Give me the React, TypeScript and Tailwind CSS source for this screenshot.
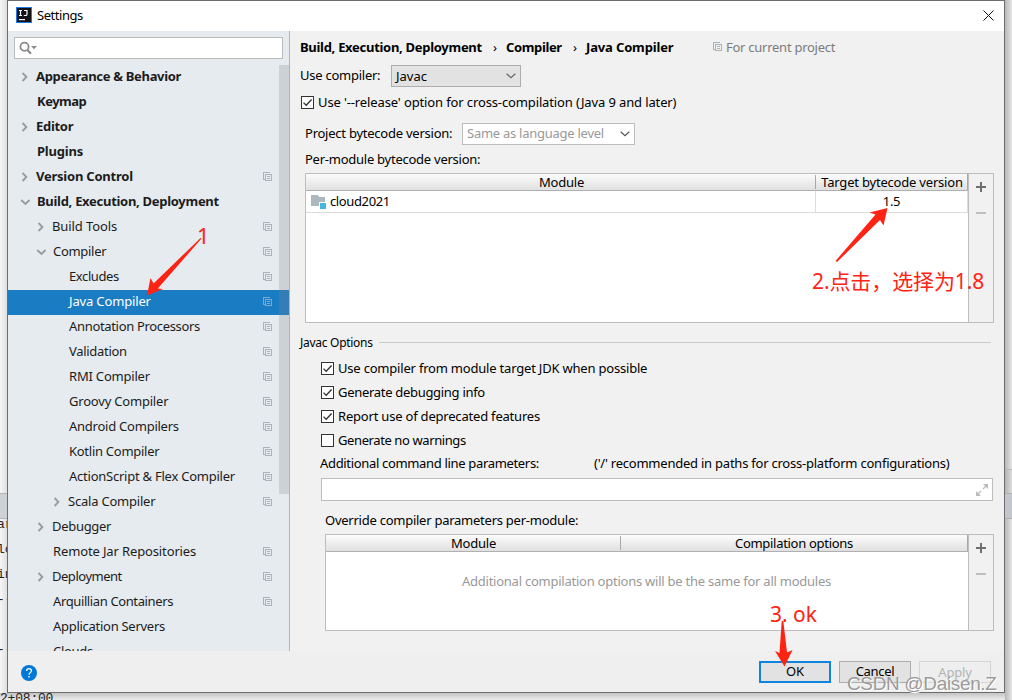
import React from "react";

type TreeItem = {
  label: string;
  level: 0 | 1 | 2;
  tracking: string;
  arrow?: "right" | "down";
  bold?: boolean;
  copy?: boolean;
  selected?: boolean;
};

const tree: TreeItem[] = [
  { label: "Appearance & Behavior", level: 0, arrow: "right", bold: true, tracking: "tracking-[-0.31px]" },
  { label: "Keymap", level: 0, bold: true, tracking: "tracking-[-0.5px]" },
  { label: "Editor", level: 0, arrow: "right", bold: true, tracking: "tracking-[-0.3px]" },
  { label: "Plugins", level: 0, bold: true, tracking: "tracking-[-0.2px]" },
  { label: "Version Control", level: 0, arrow: "right", bold: true, copy: true, tracking: "tracking-[-0.23px]" },
  { label: "Build, Execution, Deployment", level: 0, arrow: "down", bold: true, tracking: "tracking-[-0.29px]" },
  { label: "Build Tools", level: 1, arrow: "right", copy: true, tracking: "tracking-[-0.1px]" },
  { label: "Compiler", level: 1, arrow: "down", copy: true, tracking: "tracking-[-0.3px]" },
  { label: "Excludes", level: 2, copy: true, tracking: "tracking-[-0.4px]" },
  { label: "Java Compiler", level: 2, copy: true, selected: true, tracking: "tracking-[-0.15px]" },
  { label: "Annotation Processors", level: 2, copy: true, tracking: "tracking-[-0.33px]" },
  { label: "Validation", level: 2, copy: true, tracking: "tracking-[-0.3px]" },
  { label: "RMI Compiler", level: 2, copy: true, tracking: "tracking-[-0.2px]" },
  { label: "Groovy Compiler", level: 2, copy: true, tracking: "tracking-[-0.2px]" },
  { label: "Android Compilers", level: 2, copy: true, tracking: "tracking-[-0.24px]" },
  { label: "Kotlin Compiler", level: 2, copy: true, tracking: "tracking-[-0.27px]" },
  { label: "ActionScript & Flex Compiler", level: 2, copy: true, tracking: "tracking-[-0.24px]" },
  { label: "Scala Compiler", level: 2, arrow: "right", copy: true, tracking: "tracking-[-0.21px]" },
  { label: "Debugger", level: 1, arrow: "right", tracking: "tracking-[-0.3px]" },
  { label: "Remote Jar Repositories", level: 1, copy: true, tracking: "tracking-[-0.13px]" },
  { label: "Deployment", level: 1, arrow: "right", copy: true, tracking: "tracking-[-0.48px]" },
  { label: "Arquillian Containers", level: 1, copy: true, tracking: "tracking-[-0.38px]" },
  { label: "Application Servers", level: 1, tracking: "tracking-[-0.28px]" },
  { label: "Clouds", level: 1, tracking: "tracking-[-0.3px]" },
];

const indent = ["pl-[12px]", "pl-[28px]", "pl-[44px]"];

function CopyIcon({ className = "text-[#a9b3ba]" }: { className?: string }) {
  return (
    <svg width="10" height="10" viewBox="0 0 10 10" fill="none" stroke="currentColor" className={`shrink-0 ${className}`} shapeRendering="crispEdges">
      <path d="M7 0.5H0.5V7H2.5M2.5 2.5H8.5V8.5H2.5ZM4 4.5H7M4 6.5H7" />
    </svg>
  );
}

function TreeArrow({ dir }: { dir?: "right" | "down" }) {
  return (
    <svg width="10" height="10" viewBox="0 0 10 10" fill="none" stroke="#999da0" strokeWidth="1.9" className="shrink-0">
      {dir === "right" && <path d="M2.6 1L6.4 5L2.6 9" />}
      {dir === "down" && <path d="M1.2 3L5.4 7L9.6 3" />}
    </svg>
  );
}

function TreeRow({ item }: { item: TreeItem }) {
  return (
    <div
      className={`flex h-[25px] shrink-0 items-center pb-[2px] pr-[16px] ${indent[item.level]} ${
        item.selected ? "bg-[#1a7dc4] text-white" : "text-[#1c1c1c]"
      }`}
    >
      <TreeArrow dir={item.arrow} />
      <span className={`-mt-px whitespace-pre ${item.arrow === "right" ? "pl-[6px]" : "pl-[7px]"} ${item.bold ? "font-bold" : ""} ${item.tracking}`}>
        {item.label}
      </span>
      <span className="grow" />
      {item.copy && <CopyIcon className={item.selected ? "text-[#7fa9cc]" : "text-[#a9b3ba]"} />}
    </div>
  );
}

function Check({ on = true }: { on?: boolean }) {
  return (
    <svg width="13" height="13" viewBox="0 0 13 13" className="-mt-px shrink-0">
      <rect x="0.5" y="0.5" width="12" height="12" fill="#fff" stroke="#333" />
      {on && <path d="M2.5 6.6L5.2 9.3L10.6 3.5" fill="none" stroke="#333" strokeWidth="1.3" />}
    </svg>
  );
}

function Caret({ color }: { color: string }) {
  return (
    <svg width="10" height="6" viewBox="0 0 10 6" fill="none" stroke={color} strokeWidth="1.2" className="shrink-0">
      <path d="M0.7 0.8L5 4.8L9.3 0.8" />
    </svg>
  );
}

function TableTools() {
  return (
    <div className="flex w-[25px] shrink-0 flex-col items-center border-l border-[#bdbdbd] bg-[#f1f1f1] pt-[8px]">
      <svg width="10" height="10" viewBox="0 0 10 10" fill="#6e6e6e" shapeRendering="crispEdges">
        <rect x="0" y="4" width="10" height="2" />
        <rect x="4" y="0" width="2" height="10" />
      </svg>
      <div className="mt-[20px] h-[2px] w-[10px] bg-[#bfbfbf]" />
    </div>
  );
}

function OptionRow({ label, on, tracking }: { label: string; on: boolean; tracking: string }) {
  return (
    <div className="flex h-[24px] items-center pl-[31px]">
      <Check on={on} />
      <span className={`pb-[2px] pl-[4px] ${tracking}`}>{label}</span>
    </div>
  );
}

function Sidebar() {
  return (
    <aside className="flex h-[620px] w-[282px] shrink-0 flex-col border-r border-[#b1b5b9] bg-[#e6ebef]">
      <div className="px-[6px] pt-[6px]">
        <div className="flex h-[22px] items-center border border-[#b9bcbf] bg-white pl-[4px]">
          <svg width="19" height="14" viewBox="0 0 19 14">
            <circle cx="5.5" cy="5.8" r="4.1" fill="none" stroke="#8b8b8b" strokeWidth="1.8" />
            <path d="M8.4 8.9L12 12.8" stroke="#8b8b8b" strokeWidth="2.2" />
            <path d="M12 5H18L15 8.3Z" fill="#8b8b8b" />
          </svg>
        </div>
      </div>
      <div className="relative mt-[6px] flex min-h-0 grow flex-col overflow-hidden">
        {tree.map((item) => (
          <TreeRow key={item.label} item={item} />
        ))}
        <div className="absolute right-0 top-0 h-[429px] w-[10px] bg-[#82848c]/25" />
      </div>
    </aside>
  );
}

function MainPanel() {
  return (
    <main className="flex h-[620px] grow flex-col">
      <div className="flex h-[34px] items-center pb-[2px] pl-[10px]">
        <span className="w-[184px] font-bold tracking-[-0.29px]">Build, Execution, Deployment</span>
        <span className="w-[22px] pl-[9px]">›</span>
        <span className="w-[58px] font-bold tracking-[-0.37px]">Compiler</span>
        <span className="w-[22px] pl-[9px]">›</span>
        <span className="w-[127px] font-bold tracking-[-0.15px]">Java Compiler</span>
        <CopyIcon />
        <span className="pl-[3px] tracking-[-0.26px] text-[#7c7c7c]">For current project</span>
      </div>
      <div className="flex h-[22px] items-center pl-[10px]">
        <span className="w-[91px] pb-[2px] tracking-[-0.25px]">Use compiler:</span>
        <div className="flex h-[22px] w-[130px] items-center justify-between border border-[#adadad] bg-[#e2e2e2] pl-[4px] pr-[4px]">
          <span>Javac</span>
          <Caret color="#666" />
        </div>
      </div>
      <div className="mt-[4px] flex h-[24px] items-center pl-[11px]">
        <Check />
        <span className="pb-[2px] pl-[4px] tracking-[-0.125px]">Use '--release' option for cross-compilation (Java 9 and later)</span>
      </div>
      <div className="mt-[8px] flex h-[22px] items-center pl-[15px]">
        <span className="w-[157px] pb-[2px] tracking-[-0.24px]">Project bytecode version:</span>
        <div className="flex h-[22px] w-[173px] items-center justify-between border border-[#bdbdbd] bg-white pl-[4px] pr-[4px] text-[#999]">
          <span className="pb-[2px] tracking-[-0.26px]">Same as language level</span>
          <Caret color="#555" />
        </div>
      </div>
      <div className="mt-[5px] flex h-[20px] items-center pb-[2px] pl-[15px] tracking-[-0.25px]">Per-module bytecode version:</div>
      <div className="ml-[15px] mt-[3px] flex h-[150px] w-[689px] border border-[#bdbdbd] bg-white">
        <div className="flex grow flex-col">
          <div className="flex h-[17px] items-center border-b border-[#b0b0b0] bg-gradient-to-b from-[#fcfcfc] to-[#e0e0e0]">
            <div className="flex h-[14px] w-[510px] items-center justify-center border-r border-[#a8a8a8] pl-[2px] tracking-[-0.2px]">Module</div>
            <div className="flex h-[16px] grow items-center justify-center border-r border-[#a8a8a8] pl-px tracking-[-0.2px]">Target bytecode version</div>
          </div>
          <div className="flex h-[22px] border-b border-[#dcdcdc]">
            <div className="flex w-[510px] items-center border-r border-[#dcdcdc] pl-[5px]">
              <svg width="16" height="15" viewBox="0 0 16 15" shapeRendering="crispEdges">
                <path d="M0 1H6L8 3H14V12H0Z" fill="#adb7be" />
                <rect x="8" y="8" width="7" height="7" fill="#fff" />
                <rect x="9" y="9" width="6" height="6" fill="#40b6e0" />
              </svg>
              <span className="pb-[2px] pl-[3px] tracking-[-0.38px]">cloud2021</span>
            </div>
            <div className="flex grow items-center justify-center border-r border-[#dcdcdc] pb-[2px] tracking-[-0.3px]">1.5</div>
          </div>
        </div>
        <TableTools />
      </div>
      <div className="mt-[9px] flex h-[20px] items-center pl-[10px]">
        <span className="w-[79px] pt-[2px] text-[12px] tracking-[-0.28px]">Javac Options</span>
        <div className="h-px w-[612px] bg-[#c9c9c9]" />
      </div>
      <div className="mt-[5px]">
        <OptionRow on label="Use compiler from module target JDK when possible" tracking="tracking-[-0.2px]" />
        <OptionRow on label="Generate debugging info" tracking="tracking-[-0.3px]" />
        <OptionRow on label="Report use of deprecated features" tracking="tracking-[-0.2px]" />
        <OptionRow on={false} label="Generate no warnings" tracking="tracking-[-0.4px]" />
      </div>
      <div className="flex h-[22px] items-center pb-[2px] pl-[30px]">
        <span className="w-[274px] tracking-[-0.33px]">Additional command line parameters:</span>
        <span className="tracking-[-0.23px]">('/' recommended in paths for cross-platform configurations)</span>
      </div>
      <div className="ml-[31px] mt-[3px] flex h-[23px] w-[672px] items-center justify-end border border-[#bdbdbd] bg-white pr-[4px]">
        <svg width="12" height="12" viewBox="0 0 12 12" fill="#b9bdc0" stroke="#b9bdc0">
          <path d="M7 0H12V5ZM0 7V12H5Z" stroke="none" />
          <path d="M10 2L7 5M2 10L5 7" strokeWidth="1.4" />
        </svg>
      </div>
      <div className="mt-[10px] flex h-[20px] items-center pb-[2px] pl-[35px] tracking-[-0.25px]">Override compiler parameters per-module:</div>
      <div className="ml-[35px] mt-[3px] flex h-[97px] w-[669px] border border-[#bdbdbd] bg-white">
        <div className="flex grow flex-col">
          <div className="flex h-[17px] items-center border-b border-[#b0b0b0] bg-gradient-to-b from-[#fcfcfc] to-[#e0e0e0]">
            <div className="flex h-[14px] w-[295px] items-center justify-center border-r border-[#a8a8a8] pl-[1px] tracking-[-0.2px]">Module</div>
            <div className="flex h-[16px] grow items-center justify-center border-r border-[#a8a8a8] tracking-[-0.29px]">Compilation options</div>
          </div>
          <div className="flex h-[58px] items-center justify-center pr-px tracking-[-0.24px] text-[#999]">
            Additional compilation options will be the same for all modules
          </div>
        </div>
        <TableTools />
      </div>
    </main>
  );
}

function Footer() {
  return (
    <footer className="flex h-[41px] items-start gap-[8px] bg-[#efefef] pl-[13px] pr-[13px] pt-[10px]">
      <svg width="16" height="16" viewBox="0 0 16 16" className="mt-[4px]">
        <circle cx="8" cy="8" r="8" fill="#0078d7" />
        <path d="M5.6 6.1C5.6 4.5 6.6 3.7 8 3.7S10.4 4.5 10.4 5.9C10.4 7.6 8 7.7 8 9.8" fill="none" stroke="#fff" strokeWidth="1.2" />
        <rect x="7.3" y="11" width="1.4" height="1.5" fill="#fff" />
      </svg>
      <div className="grow" />
      <div className="flex h-[22px] w-[72px] items-center justify-center border-2 border-[#0f83dd] bg-[#e2e2e2] pb-[2px]">OK</div>
      <div className="flex h-[22px] w-[72px] items-center justify-center border border-[#adadad] bg-[#e2e2e2] pb-[2px] tracking-[-0.3px]">Cancel</div>
      <div className="flex h-[22px] w-[72px] items-center justify-center border border-[#d5d5d5] bg-[#eeeeee] pb-px tracking-[-0.2px] text-[#b3b3b3]">Apply</div>
    </footer>
  );
}

function Backdrop() {
  return (
    <div className="flex h-[700px] w-[7px] shrink-0 flex-col bg-gradient-to-r from-[#f6f6f6] to-[#e0e0e0] font-['Liberation_Mono'] text-[13px] leading-[25px] text-[#222]">
      <div className="h-[493px]" />
      <div className="h-[26px] border-y border-[#b5b5b5] bg-[#ced2d7]" />
      <div className="flex flex-col overflow-hidden whitespace-pre pt-px">
        <span className="-ml-[3px] -mt-[8px]">ar</span>
        <span className="-ml-[3px]">lo</span>
        <span className="-ml-[3px]">in</span>
        <span className="-ml-[3px]">--</span>
        <span>{" "}</span>
        <span className="-ml-[3px]">--</span>
      </div>
    </div>
  );
}

function Annotations() {
  return (
    <>
      <svg width="1012" height="700" viewBox="0 0 1012 700" fill="#ff2314" className="pointer-events-none absolute left-0 top-0">
        <path d="M201.5 238.5L157.8 288.6L163 289L147 295.5L150.5 278L153.5 283.5L200.5 238Z" />
        <path d="M835.5 261L875.5 214.5L869.5 212.5L887.5 208L883.5 225.5L880 220L837 262Z" />
        <path d="M781.7 621L779.5 653L775 651L784.5 666.5L792.5 650L787 652.5L783.3 621Z" />
      </svg>
      <div className="pointer-events-none absolute left-[197px] top-[221px] text-[22px] leading-[28px] text-[#ff2314]">1</div>
      <div className="pointer-events-none absolute left-[812px] top-[266px] whitespace-nowrap text-[21px] leading-[30px] tracking-[-0.1px] text-[#ff2314]">
        2.点击，选择为1.8
      </div>
      <div className="pointer-events-none absolute left-[770px] top-[599px] whitespace-nowrap text-[21px] leading-[30px] text-[#ff2314]">3. ok</div>
      <div className="pointer-events-none absolute left-[847px] top-[671px] whitespace-nowrap font-['Liberation_Sans'] text-[19px] leading-[26px] tracking-[-0.35px] text-[#8f8f8f]/90 [text-shadow:1px_1px_0_#fff]">
        CSDN @Daisen.Z
      </div>
    </>
  );
}

export default function App() {
  return (
    <div className="relative flex h-[700px] w-[1012px] overflow-hidden bg-[#e4e4e4] font-['Noto_Sans','Noto_Sans_CJK_SC',sans-serif] text-[13px] leading-[18px] whitespace-nowrap text-black">
      <Backdrop />
      <div className="flex h-[700px] w-[998px] shrink-0 flex-col">
        <div className="flex h-[693px] flex-col border border-[#6d6d6d] bg-[#f1f1f1]">
          <header className="flex h-[30px] shrink-0 items-center bg-white pl-[8px] pr-[10px]">
            <svg width="16" height="16" viewBox="0 0 16 16" className="-mt-[2px]">
              <rect width="16" height="16" fill="#1a7be8" />
              <rect x="1" y="1" width="14" height="14" fill="#111318" />
              <path d="M3 3.5H6M4.5 3.5V8M3 8.5H6M8 3.5H11V7.2Q11 8.5 9.5 8.5H7.8" fill="none" stroke="#fff" strokeWidth="1.2" />
              <rect x="3" y="12" width="6" height="1.2" fill="#fff" />
            </svg>
            <span className="grow pb-[2px] pl-[5px] tracking-[-0.45px]">Settings</span>
            <svg width="11" height="11" viewBox="0 0 11 11" fill="none" stroke="#111" className="-mt-[2px]">
              <path d="M0.5 0.5L10.5 10.5M10.5 0.5L0.5 10.5" />
            </svg>
          </header>
          <div className="flex h-[620px] shrink-0">
            <Sidebar />
            <MainPanel />
          </div>
          <Footer />
        </div>
        <div className="-ml-[7px] h-[7px] overflow-hidden bg-gradient-to-b from-[#c4c4c4] to-[#ececec] font-['Liberation_Mono'] text-[13px] leading-[12px] tracking-[-0.2px] text-[#222]">2+08:00</div>
      </div>
      <div className="flex w-[7px] shrink-0 flex-col bg-gradient-to-r from-[#b8b8b8] to-[#e6e6e6]">
        <div className="h-[469px]" />
        <div className="h-[24px] border-t border-[#b9b9b9] bg-[#8f8f8f]/10" />
        <div className="h-[26px] border-y border-[#b0b0b0] bg-[#c3c7cd]" />
      </div>
      <Annotations />
    </div>
  );
}
